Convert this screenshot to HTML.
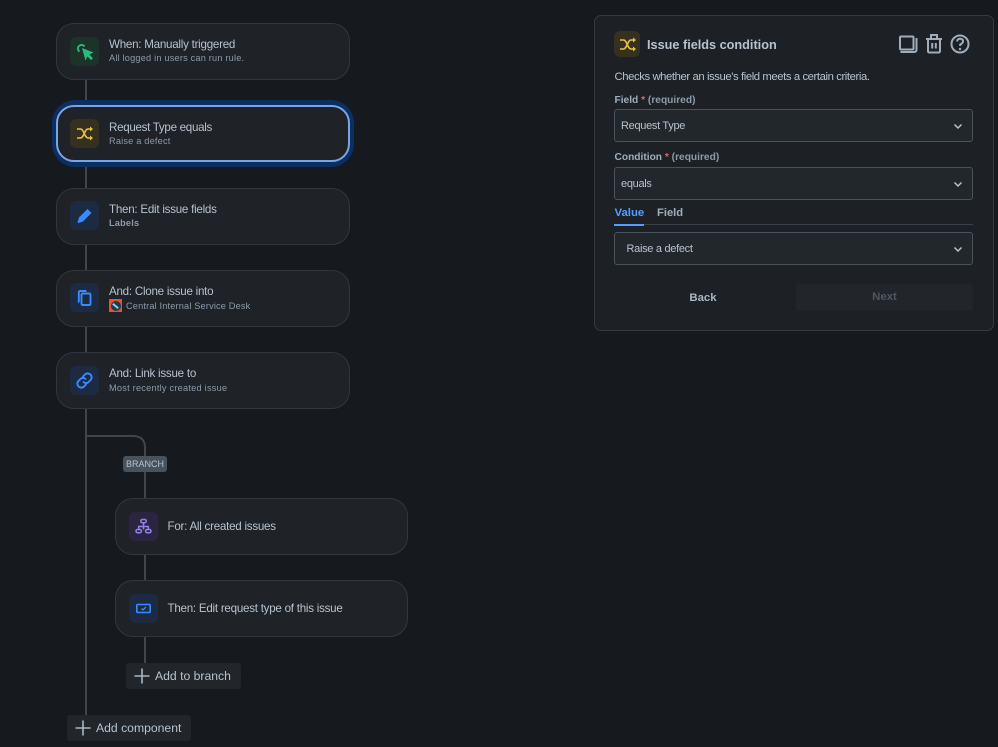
<!DOCTYPE html>
<html lang="en">
<head>
<meta charset="utf-8">
<style>
html,body{margin:0;padding:0;width:998px;height:747px;overflow:hidden;background:#16191d;font-family:"Liberation Sans",sans-serif;}
.abs,.card,.line,.ic,.t,.s,.sel,.btn{position:absolute;box-sizing:border-box;}
.card{width:294px;height:57px;background:#1f2227;border:1px solid #32373e;border-radius:18px;}
.line{background:#3f464e;width:2px;}
.ic{width:29px;height:29px;border-radius:6px;}
.ic svg{position:absolute;left:4px;top:4px;width:21px;height:21px;}
.t{font-size:11.6px;line-height:14px;color:#b6c2cf;white-space:nowrap;letter-spacing:-.25px;}
.s{font-size:9.2px;line-height:12px;color:#8c9bab;white-space:nowrap;letter-spacing:.2px;}
.sel{left:614px;width:359px;height:33px;background:#22272b;border:1px solid #4a525b;border-radius:3px;color:#b6c2cf;font-size:11px;letter-spacing:-.3px;line-height:32px;padding-left:6px;}
.sel svg{position:absolute;right:9px;top:11px;width:10px;height:10px;}
.lab{position:absolute;left:614.5px;font-size:10.2px;font-weight:bold;line-height:12px;color:#9fadbc;white-space:nowrap;}
.lab b{color:#e0695c;}
.lab span{color:#8c9bab;}
.btn{background:#22262b;border-radius:3px;color:#b6c2cf;font-size:12.2px;line-height:26px;height:26px;}
.btn svg{position:absolute;left:8px;top:5px;width:16px;height:16px;}
</style>
</head>
<body>
<!-- connectors -->
<div class="line" style="left:85px;top:79px;height:26px"></div>
<div class="line" style="left:85px;top:162px;height:27px"></div>
<div class="line" style="left:85px;top:244px;height:27px"></div>
<div class="line" style="left:85px;top:326px;height:27px"></div>
<div class="line" style="left:85px;top:408px;height:310px"></div>
<svg class="abs" style="left:85px;top:434px;width:64px;height:70px" viewBox="0 0 64 70"><path d="M1 2H48Q60 2 60 14V66" fill="none" stroke="#3f464e" stroke-width="2"/></svg>
<div class="line" style="left:144px;top:554px;height:27px"></div>
<div class="line" style="left:144px;top:636px;height:28px"></div>

<!-- card 1 -->
<div class="card" style="left:56px;top:23px"></div>
<div class="ic" style="left:70px;top:37px;background:#1c3329"><svg viewBox="0 0 21 21"><path d="M5.500 10.500A3.600 3.600 0 1 1 10.500 5.500" fill="none" stroke="#2abb7f" stroke-width="1.800"/><path d="M8 7L19.500 11.500L15.500 13.500L19 17.500L17 19L13.500 15.500L11.500 19.500Z" fill="#2abb7f"/></svg></div>
<div class="t" style="left:109px;top:38px">When: Manually triggered</div>
<div class="s" style="left:109px;top:52px">All logged in users can run rule.</div>

<!-- card 2 -->
<div class="abs" style="left:52px;top:100px;width:302px;height:67px;border-radius:23px;background:#0b2f63"></div>
<div class="card" style="left:56px;top:105px;height:57px;border:2px solid #7aa5e3;background:#1f2227"></div>
<div class="ic" style="left:70px;top:119px;background:#35301f"><svg viewBox="0 0 21 21"><g fill="none" stroke="#e9c13f" stroke-width="1.600"><path d="M3 6H6.500C10 6 10.500 15 14 15H17"/><path d="M3 15H6.500C10 15 10.500 6 14 6H17"/></g><path d="M16 3.500L19 6L16 8.500ZM16 12.500L19 15L16 17.500Z" fill="#e9c13f"/></svg></div>
<div class="t" style="left:109px;top:120.500px;letter-spacing:-.3px">Request Type equals</div>
<div class="s" style="left:109px;top:135px">Raise a defect</div>

<!-- card 3 -->
<div class="card" style="left:56px;top:188px"></div>
<div class="ic" style="left:70px;top:201px;background:#1c2b41"><svg viewBox="0 0 21 21"><path d="M13.500 4L17.500 8L9 16.500L4.500 18Q3.500 18 3.700 17L5 12.500Z" fill="#388bff"/></svg></div>
<div class="t" style="left:109px;top:202.500px">Then: Edit issue fields</div>
<div class="s" style="left:109px;top:217px;font-weight:bold;color:#8c9bab">Labels</div>

<!-- card 4 -->
<div class="card" style="left:56px;top:270px"></div>
<div class="ic" style="left:70px;top:283px;background:#1c2b41"><svg viewBox="0 0 21 21"><g fill="none" stroke="#388bff" stroke-width="1.900"><path d="M5 15H4.800V5.500Q4.800 4 6.300 4H12.500"/><rect x="7.500" y="6.500" width="9" height="11.500" rx="1.200"/></g></svg></div>
<div class="t" style="left:109px;top:284.500px">And: Clone issue into</div>
<div class="abs" style="left:109px;top:299px;width:13px;height:13px;background:#e2532c"><div class="abs" style="left:1.500px;top:1.500px;width:10px;height:10px;border-radius:50%;background:#1d3a52"></div><div class="abs" style="left:3px;top:5.500px;width:7px;height:2px;background:#8fd0ef;transform:rotate(40deg)"></div></div>
<div class="s" style="left:126px;top:300px;letter-spacing:.17px">Central Internal Service Desk</div>

<!-- card 5 -->
<div class="card" style="left:56px;top:352px"></div>
<div class="ic" style="left:70px;top:366px;background:#1c2b41"><svg viewBox="0 0 21 21"><g fill="none" stroke="#388bff" stroke-width="1.900" stroke-linecap="round"><path d="M9 6.500L11.500 4Q14 2.500 16.500 4.500Q18.500 7 17 9.500L14 12.500Q11.500 14 9.500 12"/><path d="M12 14.500L9.500 17Q7 18.500 4.500 16.500Q2.500 14 4 11.500L7 8.500Q9.500 7 11.500 9"/></g></svg></div>
<div class="t" style="left:109px;top:367px">And: Link issue to</div>
<div class="s" style="left:109px;top:382px;letter-spacing:.24px">Most recently created issue</div>

<!-- branch -->
<div class="abs" style="left:123px;top:456px;width:44px;height:16px;background:#48525c;border-radius:3px;color:#b6c2cf;font-size:9px;line-height:16px;text-align:center">BRANCH</div>

<div class="card" style="left:115px;top:498px;width:293px"></div>
<div class="ic" style="left:129px;top:512px;background:#2b2541"><svg viewBox="0 0 21 21"><g fill="none" stroke="#9482ea" stroke-width="1.500"><rect x="7.800" y="3.500" width="5.400" height="3.200" rx="1.500"/><rect x="3" y="13.500" width="5.400" height="3.200" rx="1.500"/><rect x="12.600" y="13.500" width="5.400" height="3.200" rx="1.500"/><path d="M10.500 6.700V13.500M5.700 13.500V10.500H15.300V13.500"/></g></svg></div>
<div class="t" style="left:167.500px;top:519.500px">For: All created issues</div>

<div class="card" style="left:115px;top:580px;width:293px"></div>
<div class="ic" style="left:129px;top:594px;background:#1c2b41"><svg viewBox="0 0 21 21"><rect x="3.800" y="6.500" width="13.400" height="8" rx="1" fill="none" stroke="#388bff" stroke-width="1.600"/><path d="M8.500 10.500L10 12L13 9" fill="none" stroke="#388bff" stroke-width="1.300"/></svg></div>
<div class="t" style="left:167.500px;top:601.500px">Then: Edit request type of this issue</div>

<div class="btn" style="left:126px;top:663px;width:115px;padding-left:29px"><svg viewBox="0 0 16 16"><path d="M8 .5V15.500M.5 8H15.500" stroke="#aab6c3" stroke-width="1.600"/></svg>Add to branch</div>
<div class="btn" style="left:67px;top:715px;width:124px;padding-left:29px"><svg viewBox="0 0 16 16"><path d="M8 .5V15.500M.5 8H15.500" stroke="#aab6c3" stroke-width="1.600"/></svg>Add component</div>

<!-- right panel -->
<div class="abs" style="left:594px;top:15px;width:400px;height:316px;background:#1d2125;border:1px solid #343a41;border-radius:7px"></div>
<div class="ic" style="left:614px;top:31px;width:26px;height:26px;background:#35301f"><svg viewBox="0 0 21 21" style="left:2.500px;top:2.500px"><g fill="none" stroke="#e9c13f" stroke-width="1.600"><path d="M3 6H6.500C10 6 10.500 15 14 15H17"/><path d="M3 15H6.500C10 15 10.500 6 14 6H17"/></g><path d="M16 3.500L19 6L16 8.500ZM16 12.500L19 15L16 17.500Z" fill="#e9c13f"/></svg></div>
<div class="abs" style="left:647px;top:36.500px;font-size:12.700px;line-height:16px;font-weight:bold;color:#b6c2cf;white-space:nowrap">Issue fields condition</div>
<svg class="abs" style="left:897px;top:33px;width:76px;height:22px" viewBox="0 0 76 22"><g fill="none" stroke="#9fadbc" stroke-width="2"><rect x="3" y="3.500" width="13.500" height="13" rx="1"/><path d="M3.500 19H17Q19.500 19 19.500 16.500V5"/><path d="M29 6H45M34 6V2H40V6M31 6V18Q31 19.500 32.500 19.500H41.500Q43 19.500 43 18V6M35.200 10V15.500M38.800 10V15.500"/><circle cx="63" cy="11" r="8.500"/><path d="M60 8.500Q60.500 5.800 63 5.800Q66 5.800 66 8.500Q66 10 63.200 11.500V13"/></g><circle cx="63" cy="16" r="1.200" fill="#9fadbc"/></svg>
<div class="abs" style="left:614.500px;top:70px;font-size:11.300px;line-height:14px;color:#b6c2cf;white-space:nowrap;letter-spacing:-.41px">Checks whether an issue's field meets a certain criteria.</div>

<div class="lab" style="top:95px">Field <b>*</b> <span>(required)</span></div>
<div class="sel" style="top:109px">Request Type<svg viewBox="0 0 10 10"><path d="M1.500 3.500L5 7L8.500 3.500" fill="none" stroke="#b6c2cf" stroke-width="1.500"/></svg></div>
<div class="lab" style="top:152px">Condition <b>*</b> <span>(required)</span></div>
<div class="sel" style="top:167px">equals<svg viewBox="0 0 10 10"><path d="M1.500 3.500L5 7L8.500 3.500" fill="none" stroke="#b6c2cf" stroke-width="1.500"/></svg></div>

<div class="abs" style="left:614.500px;top:206px;font-size:11.400px;line-height:14px;font-weight:bold;color:#579dff">Value</div>
<div class="abs" style="left:657px;top:206px;font-size:11.200px;line-height:14px;font-weight:bold;color:#9fadbc">Field</div>
<div class="abs" style="left:614px;top:224px;width:359px;height:1px;background:#3a4149"></div>
<div class="abs" style="left:614px;top:224px;width:30px;height:2px;background:#579dff"></div>

<div class="sel" style="top:232px;padding-left:11.500px">Raise a defect<svg viewBox="0 0 10 10"><path d="M1.500 3.500L5 7L8.500 3.500" fill="none" stroke="#b6c2cf" stroke-width="1.500"/></svg></div>

<div class="abs" style="left:614px;top:291px;width:178px;text-align:center;font-size:11.400px;line-height:14px;font-weight:bold;color:#a8b5c2">Back</div>
<div class="btn" style="left:796px;top:284px;width:177px;background:#22262a;color:#4f5861;text-align:center;font-weight:bold;font-size:11.400px;line-height:27px">Next</div>
</body>
</html>
